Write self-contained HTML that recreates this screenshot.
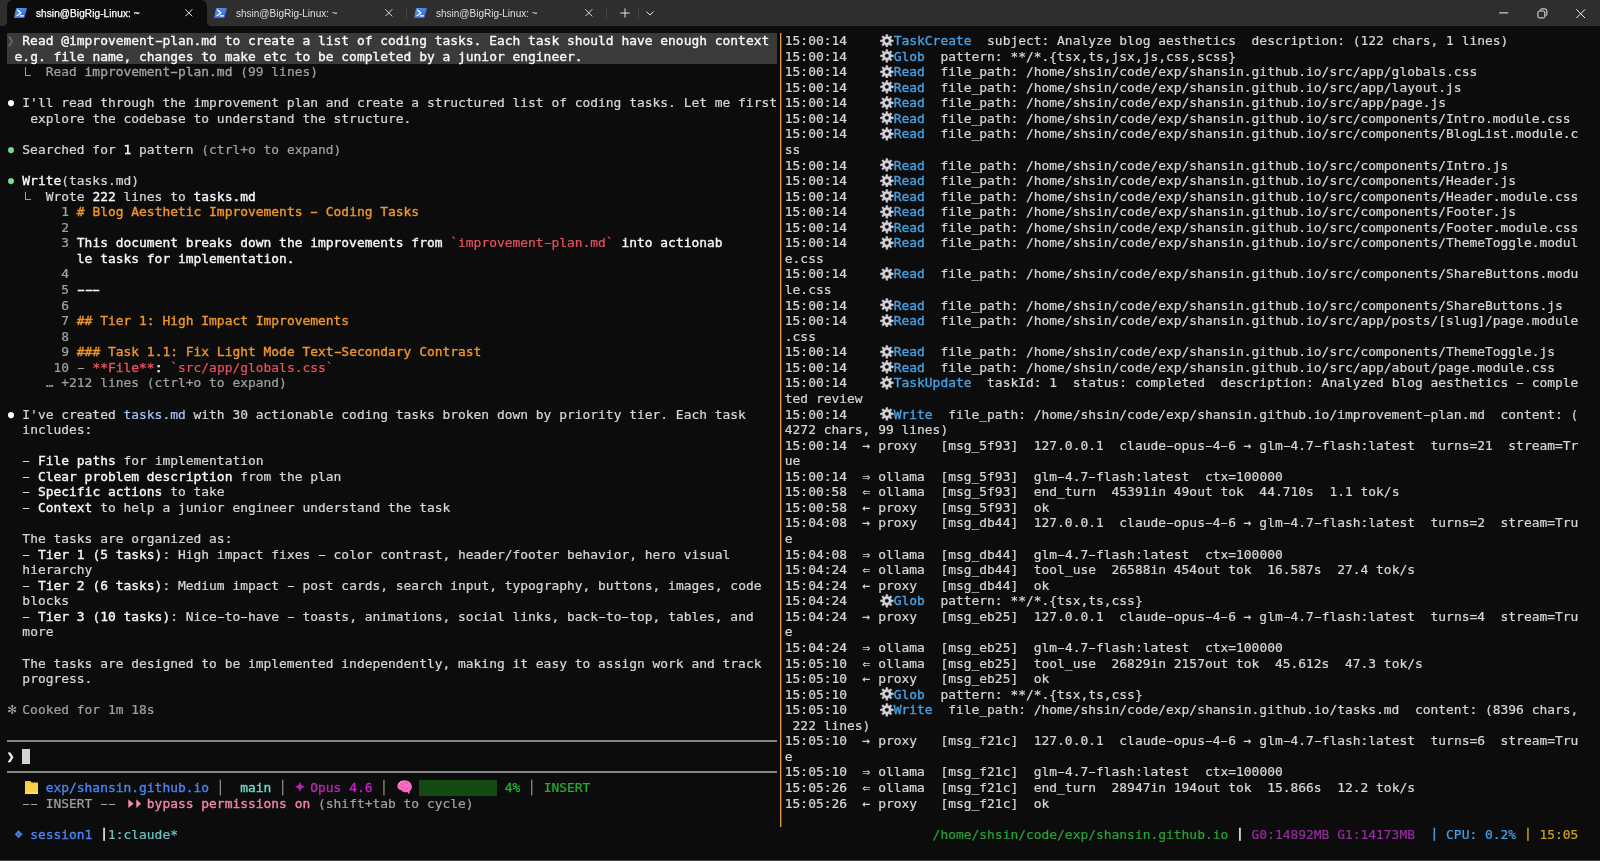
<!DOCTYPE html><html lang="en"><head><meta charset="utf-8"><title>shsin@BigRig-Linux: ~</title><style>
html,body{margin:0;padding:0}
body{width:1600px;height:861px;background:#0c0c0c;overflow:hidden;position:relative;font-family:"DejaVu Sans Mono","Liberation Mono",monospace}
#tb{position:absolute;left:0;top:0;width:1600px;height:25.8px;background:#2e2e2e}
.tab .t{will-change:transform}
.tab{position:absolute;top:0;height:25.5px;width:200px;font:10px "Liberation Sans",sans-serif;color:#dedede}
.tab .t{position:absolute;left:29px;top:8.100px;white-space:pre;line-height:12px;letter-spacing:0}
.tab .x{position:absolute;left:178px;top:9.200px;width:7.600px;height:7.600px}
.tab .ic{position:absolute;left:7.100px;top:8px;width:13px;height:10px}
#t1{left:7px;background:#0c0c0c;border-radius:6px 6px 0 0;color:#fff}
#t1 .t{-webkit-text-stroke:0.25px #fff;letter-spacing:0.1px}
#t2{left:207px}
#t3{left:407px}
.fl{position:absolute;top:21.500px;width:4px;height:4px;margin-left:2px;background:radial-gradient(circle at 0 0,#2e2e2e 3.600px,#0c0c0c 4.200px)}
.fr{margin-left:0;background:radial-gradient(circle at 100% 0,#2e2e2e 3.600px,#0c0c0c 4.200px)}
.vs{position:absolute;top:7px;width:1px;height:12px;background:#444}
.r{position:absolute;height:15.5625px;line-height:15.5625px;white-space:pre;font-size:12.92px;letter-spacing:0.0097px;color:#d6d6d6;-webkit-text-stroke:0.22px currentColor;font-kerning:none;font-variant-ligatures:none}
.r span,.r i{font-style:normal}
.g{display:inline-block;width:7.78px;height:15.5625px;vertical-align:top;text-align:center;letter-spacing:0;position:relative;overflow:visible}
.w2{width:15.56px}
.h{display:inline-block;transform:scaleX(1.8)}
.b{-webkit-text-stroke:0.36px currentColor}
.w{color:#f8f8f8}
.d{color:#a0a0a0}
.d2{color:#666}
.o{color:#f0962a}
.rd{color:#e8525f}
.lb{color:#a6c4f6}
.bl{color:#4a84ee}
.dia{top:-0.9px;font-size:13.6px}
.tl{color:#72dac6}
.sp{color:#8c8c8c}
.mg{color:#c421c4}
.pu{color:#b22bb2}
.gn{color:#22b02e}
.pk{color:#f486a5}
.cy{color:#6cc3c3}
.tb{color:#45a0e2}
.g2{color:#25a536}
.pp{color:#962d9e}
.yl{color:#c9a227}
.gr{color:#7bd88c}
.dot{font-size:10px}
.wh{color:#fff}
.big{width:17.78px;margin:0 -5px}
.star{font-size:15px;left:1.4px;-webkit-text-stroke:0}
.mg.big{font-size:15.5px;left:1.3px;top:-1.2px;-webkit-text-stroke:0.9px currentColor}
.dot{left:0.4px}
.pp2{top:-1.6px}
.hl{position:absolute;background:#3a3a3a}
.hr{position:absolute;height:1.4px;background:#868686}
.cur{background:#d4d4d4}
.bar{width:77.80px;background:#124a12}
.elb::after{content:"";position:absolute;left:3.1px;top:3.2px;width:4.3px;height:7.5px;border-left:1.25px solid #a0a0a0;border-bottom:1.25px solid #a0a0a0}
.gear{fill:#d3d1d8;stroke:#d3d1d8;stroke-width:.7px;stroke-linejoin:round;fill-rule:evenodd;position:absolute;left:1.95px;top:0.65px;width:13.7px;height:13.7px}
.fold{position:absolute;left:2.6px;top:1.2px;width:13.5px;height:13px}
.brain{position:absolute;left:1.1px;top:0px;width:15px;height:14px}
.tri svg{overflow:visible;position:absolute;left:0;top:0;width:15.56px;height:15.5625px}
#sep{position:absolute;left:779.8px;top:33px;width:1.4px;height:793.7px;background:#e59a4f;border-right:0.9px solid #6b3510}
#txt{position:absolute;left:0;top:0;width:1600px;height:861px;will-change:transform}
#bot{position:absolute;left:0;top:859.5px;width:1600px;height:2px;background:#444}
</style></head><body>
<div id="tb"><div class="tab" id="t1"><svg class="ic" viewBox="0 0 13 10"><defs><linearGradient id="pg1" x1="0" y1="0" x2="1" y2="1"><stop offset="0" stop-color="#5b9bf0"/><stop offset="1" stop-color="#2c5fd0"/></linearGradient></defs><path d="M2.600 0H12.400Q13.100 0 12.900.7L10.700 9.300Q10.500 10 9.800 10H.6Q-.1 10 .1 9.300L2 .7Q2.100 0 2.600 0Z" fill="url(#pg1)"/><path d="M3.700 2.300 6.900 5 3 7.700" stroke="#fff" stroke-width="1.250" fill="none" stroke-linecap="round" stroke-linejoin="round"/><path d="M6.400 7.900H9.600" stroke="#fff" stroke-width="1.150" stroke-linecap="round"/></svg><span class="t">shsin@BigRig-Linux: ~</span><svg class="x" viewBox="0 0 8 8"><path d="M.3.3l7.400 7.400M7.700.3l-7.400 7.400" stroke="#f4f4f4" stroke-width="1"/></svg></div><div class="tab" id="t2"><svg class="ic" viewBox="0 0 13 10"><defs><linearGradient id="pg2" x1="0" y1="0" x2="1" y2="1"><stop offset="0" stop-color="#5b9bf0"/><stop offset="1" stop-color="#2c5fd0"/></linearGradient></defs><path d="M2.600 0H12.400Q13.100 0 12.900.7L10.700 9.300Q10.500 10 9.800 10H.6Q-.1 10 .1 9.300L2 .7Q2.100 0 2.600 0Z" fill="url(#pg2)"/><path d="M3.700 2.300 6.900 5 3 7.700" stroke="#fff" stroke-width="1.250" fill="none" stroke-linecap="round" stroke-linejoin="round"/><path d="M6.400 7.900H9.600" stroke="#fff" stroke-width="1.150" stroke-linecap="round"/></svg><span class="t">shsin@BigRig-Linux: ~</span><svg class="x" viewBox="0 0 8 8"><path d="M.3.3l7.400 7.400M7.700.3l-7.400 7.400" stroke="#dcdcdc" stroke-width="1"/></svg></div><div class="tab" id="t3"><svg class="ic" viewBox="0 0 13 10"><defs><linearGradient id="pg3" x1="0" y1="0" x2="1" y2="1"><stop offset="0" stop-color="#5b9bf0"/><stop offset="1" stop-color="#2c5fd0"/></linearGradient></defs><path d="M2.600 0H12.400Q13.100 0 12.900.7L10.700 9.300Q10.500 10 9.800 10H.6Q-.1 10 .1 9.300L2 .7Q2.100 0 2.600 0Z" fill="url(#pg3)"/><path d="M3.700 2.300 6.900 5 3 7.700" stroke="#fff" stroke-width="1.250" fill="none" stroke-linecap="round" stroke-linejoin="round"/><path d="M6.400 7.900H9.600" stroke="#fff" stroke-width="1.150" stroke-linecap="round"/></svg><span class="t">shsin@BigRig-Linux: ~</span><svg class="x" viewBox="0 0 8 8"><path d="M.3.3l7.400 7.400M7.700.3l-7.400 7.400" stroke="#dcdcdc" stroke-width="1"/></svg></div>
<div class="fl" style="left:1px"></div><div class="fl fr" style="left:207px"></div>
<div class="vs" style="left:406px"></div><div class="vs" style="left:606px"></div><div class="vs" style="left:638px"></div>
<svg style="position:absolute;left:619.500px;top:8px" width="10" height="10" viewBox="0 0 10 10"><path d="M5 .4v9.200M.4 5h9.200" stroke="#e4e4e4" stroke-width="1"/></svg>
<svg style="position:absolute;left:645.500px;top:11px" width="8" height="5" viewBox="0 0 8 5"><path d="M.5.600 4 4 7.500.6" stroke="#e4e4e4" stroke-width="1" fill="none"/></svg>
<svg style="position:absolute;left:1499px;top:8px" width="10" height="10" viewBox="0 0 10 10"><path d="M.2 4.900h9" stroke="#f0f0f0" stroke-width="1"/></svg>
<svg style="position:absolute;left:1537px;top:7.500px" width="11" height="11" viewBox="0 0 11 11"><rect x=".9" y="3" width="6.900" height="6.900" rx="1.500" stroke="#f0f0f0" fill="none" stroke-width="1"/><path d="M2.900 2.200Q3.200.900 4.600.9H8Q9.900.9 9.900 2.800V6.200Q9.900 7.600 8.600 7.900" stroke="#f0f0f0" fill="none" stroke-width="1"/></svg>
<svg style="position:absolute;left:1576.400px;top:8.500px" width="9.400" height="9.400" viewBox="0 0 9.400 9.400"><path d="M.3.300l8.800 8.800M9.100.3L.3 9.100" stroke="#f4f4f4" stroke-width="1"/></svg>
</div>
<div class="hl" style="left:6.6px;top:32.90px;width:770.22px;height:30.82px"></div>
<div class="hr" style="left:7px;top:740.34px;width:770.22px"></div>
<div class="hr" style="left:7px;top:771.47px;width:770.22px"></div>
<div id="sep"></div><div id="txt">
<div class="r" style="left:6.80px;top:33.00px"><i class="g d2">❯</i> <span class="b w">Read @improvement<i class="h">-</i>plan.md to create a list of coding tasks. Each task should have enough context</span></div>
<div class="r" style="left:6.80px;top:48.56px"> <span class="b w">e.g. file name, changes to make etc to be completed by a junior engineer.</span></div>
<div class="r" style="left:6.80px;top:64.12px"><span class="d">  </span><i class="g elb"></i><span class="d">  Read </span><span class="d b">improvement<i class="h">-</i>plan.md</span><span class="d"> (99 lines)</span></div>
<div class="r" style="left:6.80px;top:95.25px"><i class="g dot wh">●</i> I'll read through the improvement plan and create a structured list of coding tasks. Let me first</div>
<div class="r" style="left:6.80px;top:110.81px">   explore the codebase to understand the structure.</div>
<div class="r" style="left:6.80px;top:141.94px"><i class="g dot gr">●</i> Searched for <span class="b w">1</span> pattern <span class="d">(ctrl+o to expand)</span></div>
<div class="r" style="left:6.80px;top:173.06px"><i class="g dot gr">●</i> <span class="b w">Write</span>(tasks.md)</div>
<div class="r" style="left:6.80px;top:188.62px">  <i class="g elb"></i>  Wrote <span class="b w">222</span> lines to <span class="b w">tasks.md</span></div>
<div class="r" style="left:6.80px;top:204.19px"><span class="d">       1 </span><span class="o b"># Blog Aesthetic Improvements </span><span class="o b"><i class="h">-</i></span><span class="o b"> Coding Tasks</span></div>
<div class="r" style="left:6.80px;top:219.75px"><span class="d">       2 </span></div>
<div class="r" style="left:6.80px;top:235.31px"><span class="d">       3 </span><span class="b w">This document breaks down the improvements from </span><span class="rd">`improvement<i class="h">-</i>plan.md`</span><span class="b w"> into actionab</span></div>
<div class="r" style="left:6.80px;top:250.88px"><span class="b w">         le tasks for implementation.</span></div>
<div class="r" style="left:6.80px;top:266.44px"><span class="d">       4 </span></div>
<div class="r" style="left:6.80px;top:282.00px"><span class="d">       5 </span><span class="b w"><i class="h">-</i><i class="h">-</i><i class="h">-</i></span></div>
<div class="r" style="left:6.80px;top:297.56px"><span class="d">       6 </span></div>
<div class="r" style="left:6.80px;top:313.12px"><span class="d">       7 </span><span class="o b">## Tier 1: High Impact Improvements</span></div>
<div class="r" style="left:6.80px;top:328.69px"><span class="d">       8 </span></div>
<div class="r" style="left:6.80px;top:344.25px"><span class="d">       9 </span><span class="o b">### Task 1.1: Fix Light Mode Text<i class="h">-</i>Secondary Contrast</span></div>
<div class="r" style="left:6.80px;top:359.81px"><span class="d">      10 </span><span class="d"><i class="h">-</i> </span><span class="rd b">**File**</span><span class="b w">: </span><span class="rd">`src/app/globals.css`</span></div>
<div class="r" style="left:6.80px;top:375.38px"><span class="d">     … +212 lines (ctrl+o to expand)</span></div>
<div class="r" style="left:6.80px;top:406.50px"><i class="g dot wh">●</i> I've created <span class="lb">tasks.md</span> with 30 actionable coding tasks broken down by priority tier. Each task</div>
<div class="r" style="left:6.80px;top:422.06px">  includes:</div>
<div class="r" style="left:6.80px;top:453.19px">  <i class="h">-</i> <span class="b w">File paths</span> for implementation</div>
<div class="r" style="left:6.80px;top:468.75px">  <i class="h">-</i> <span class="b w">Clear problem description</span> from the plan</div>
<div class="r" style="left:6.80px;top:484.31px">  <i class="h">-</i> <span class="b w">Specific actions</span> to take</div>
<div class="r" style="left:6.80px;top:499.88px">  <i class="h">-</i> <span class="b w">Context</span> to help a junior engineer understand the task</div>
<div class="r" style="left:6.80px;top:531.00px">  The tasks are organized as:</div>
<div class="r" style="left:6.80px;top:546.56px">  <i class="h">-</i> <span class="b w">Tier 1 (5 tasks)</span>: High impact fixes <i class="h">-</i> color contrast, header/footer behavior, hero visual</div>
<div class="r" style="left:6.80px;top:562.12px">  hierarchy</div>
<div class="r" style="left:6.80px;top:577.69px">  <i class="h">-</i> <span class="b w">Tier 2 (6 tasks)</span>: Medium impact <i class="h">-</i> post cards, search input, typography, buttons, images, code</div>
<div class="r" style="left:6.80px;top:593.25px">  blocks</div>
<div class="r" style="left:6.80px;top:608.81px">  <i class="h">-</i> <span class="b w">Tier 3 (10 tasks)</span>: Nice<i class="h">-</i>to<i class="h">-</i>have <i class="h">-</i> toasts, animations, social links, back<i class="h">-</i>to<i class="h">-</i>top, tables, and</div>
<div class="r" style="left:6.80px;top:624.38px">  more</div>
<div class="r" style="left:6.80px;top:655.50px">  The tasks are designed to be implemented independently, making it easy to assign work and track</div>
<div class="r" style="left:6.80px;top:671.06px">  progress.</div>
<div class="r" style="left:6.80px;top:702.19px"><i class="g d star big">✻</i><span class="d"> Cooked for 1m 18s</span></div>
<div class="r" style="left:6.80px;top:748.88px"><i class="g b w">❯</i> <i class="g cur"></i></div>
<div class="r" style="left:6.80px;top:780.00px">  <i class="g w2"><svg class="fold" viewBox="0 0 13.5 13"><path d="M0 1Q0 0 1 0H5.2L6.8 1.6H12.6Q13.5 1.6 13.5 2.5V12.2Q13.5 13 12.7 13H.8Q0 13 0 12.2Z" fill="#f9c840"/><path d="M0 3.2H13.5V12.2Q13.5 13 12.7 13H.8Q0 13 0 12.2Z" fill="#fbd247"/><path d="M0 11.6H13.5V12.2Q13.5 13 12.7 13H.8Q0 13 0 12.2Z" fill="#ffe06a"/></svg></i> <span class="bl b">exp/shansin.github.io</span> <span class="sp">│</span>  <span class="tl b">main</span> <span class="sp">│</span> <i class="g mg big">✦</i> <span class="pu b">Opus </span><span class="mg b">4.6</span> <span class="sp">│</span> <i class="g w2"><svg class="brain" viewBox="0 0 15 14"><path d="M7.6.2C4.6.1 1.9 1.5.9 4 .1 5.9.3 7.9 1.6 9.100c.9.800 2 .9 2.800 1.100.7 1.200 2.300 2 4 2.100.9 0 1.700-.1 2.300-.3l.7 1.600c.2.500 1 .4 1.100-.1l.2-2.300c1.500-1.100 2.300-2.900 2.200-4.800C14.700 2.900 11.600.3 7.600.2Z" fill="#fb6cc4"/><path d="M3.400 4.300c1-.9 2.300-.8 3 .1M8.200 3c1.300-.6 2.700-.1 3.200 1M4 7.400c.9.700 2.100.5 2.700-.3M8.600 8.300c1.100.7 2.500.4 3.200-.6M6.500 10c.8.500 1.700.5 2.400 0" stroke="#e548a8" stroke-width=".8" fill="none" stroke-linecap="round"/><path d="M1.900 4.200C2.500 2.800 3.700 1.800 5.100 1.400" stroke="#ffa6e0" stroke-width=".9" fill="none" stroke-linecap="round"/></svg></i> <i class="g bar"></i> <span class="gn b">4%</span> <span class="sp">│</span> <span class="gn">INSERT</span></div>
<div class="r" style="left:6.80px;top:795.56px"><span class="d">  <i class="h">-</i><i class="h">-</i> INSERT <i class="h">-</i><i class="h">-</i> </span><i class="g w2 tri"><svg viewBox="0 0 15.56 15.55"><path d="M4.300 3.300 9.600 7.650 4.300 12ZM12.300 3.300 17.100 7.650 12.300 12Z" fill="#f58aa8"/></svg></i> <span class="pk b">bypass permissions on</span><span class="d"> (shift+tab to cycle)</span></div>
<div class="r" style="left:6.80px;top:826.69px"> <i class="g bl dia">❖</i> <span class="bl b">session1</span> <i class="g b w pp2">|</i><span class="cy">1:claude*</span></div>
<div class="r" style="left:784.80px;top:33.00px">15:00:14    <i class="g w2"><svg class="gear" viewBox="-10.5 -10.5 21 21"><path d="M9.9 -1.3L9.9 1.3L6.7 1.5L5.8 3.7L7.9 6.1L6.1 7.9L3.7 5.8L1.5 6.7L1.3 9.9L-1.3 9.9L-1.5 6.7L-3.7 5.8L-6.1 7.9L-7.9 6.1L-5.8 3.7L-6.7 1.5L-9.9 1.3L-9.9 -1.3L-6.7 -1.5L-5.8 -3.7L-7.9 -6.1L-6.1 -7.9L-3.7 -5.8L-1.5 -6.7L-1.3 -9.9L1.3 -9.9L1.5 -6.7L3.7 -5.8L6.1 -7.9L7.9 -6.1L5.8 -3.7L6.7 -1.5ZM3.3 0A3.3 3.3 0 1 0 -3.3 0A3.3 3.3 0 1 0 3.3 0Z"/></svg></i><span class="tb b">TaskCreate</span>  subject: Analyze blog aesthetics  description: (122 chars, 1 lines)</div>
<div class="r" style="left:784.80px;top:48.56px">15:00:14    <i class="g w2"><svg class="gear" viewBox="-10.5 -10.5 21 21"><path d="M9.9 -1.3L9.9 1.3L6.7 1.5L5.8 3.7L7.9 6.1L6.1 7.9L3.7 5.8L1.5 6.7L1.3 9.9L-1.3 9.9L-1.5 6.7L-3.7 5.8L-6.1 7.9L-7.9 6.1L-5.8 3.7L-6.7 1.5L-9.9 1.3L-9.9 -1.3L-6.7 -1.5L-5.8 -3.7L-7.9 -6.1L-6.1 -7.9L-3.7 -5.8L-1.5 -6.7L-1.3 -9.9L1.3 -9.9L1.5 -6.7L3.7 -5.8L6.1 -7.9L7.9 -6.1L5.8 -3.7L6.7 -1.5ZM3.3 0A3.3 3.3 0 1 0 -3.3 0A3.3 3.3 0 1 0 3.3 0Z"/></svg></i><span class="tb b">Glob</span>  pattern: **/*.{tsx,ts,jsx,js,css,scss}</div>
<div class="r" style="left:784.80px;top:64.12px">15:00:14    <i class="g w2"><svg class="gear" viewBox="-10.5 -10.5 21 21"><path d="M9.9 -1.3L9.9 1.3L6.7 1.5L5.8 3.7L7.9 6.1L6.1 7.9L3.7 5.8L1.5 6.7L1.3 9.9L-1.3 9.9L-1.5 6.7L-3.7 5.8L-6.1 7.9L-7.9 6.1L-5.8 3.7L-6.7 1.5L-9.9 1.3L-9.9 -1.3L-6.7 -1.5L-5.8 -3.7L-7.9 -6.1L-6.1 -7.9L-3.7 -5.8L-1.5 -6.7L-1.3 -9.9L1.3 -9.9L1.5 -6.7L3.7 -5.8L6.1 -7.9L7.9 -6.1L5.8 -3.7L6.7 -1.5ZM3.3 0A3.3 3.3 0 1 0 -3.3 0A3.3 3.3 0 1 0 3.3 0Z"/></svg></i><span class="tb b">Read</span>  file_path: /home/shsin/code/exp/shansin.github.io/src/app/globals.css</div>
<div class="r" style="left:784.80px;top:79.69px">15:00:14    <i class="g w2"><svg class="gear" viewBox="-10.5 -10.5 21 21"><path d="M9.9 -1.3L9.9 1.3L6.7 1.5L5.8 3.7L7.9 6.1L6.1 7.9L3.7 5.8L1.5 6.7L1.3 9.9L-1.3 9.9L-1.5 6.7L-3.7 5.8L-6.1 7.9L-7.9 6.1L-5.8 3.7L-6.7 1.5L-9.9 1.3L-9.9 -1.3L-6.7 -1.5L-5.8 -3.7L-7.9 -6.1L-6.1 -7.9L-3.7 -5.8L-1.5 -6.7L-1.3 -9.9L1.3 -9.9L1.5 -6.7L3.7 -5.8L6.1 -7.9L7.9 -6.1L5.8 -3.7L6.7 -1.5ZM3.3 0A3.3 3.3 0 1 0 -3.3 0A3.3 3.3 0 1 0 3.3 0Z"/></svg></i><span class="tb b">Read</span>  file_path: /home/shsin/code/exp/shansin.github.io/src/app/layout.js</div>
<div class="r" style="left:784.80px;top:95.25px">15:00:14    <i class="g w2"><svg class="gear" viewBox="-10.5 -10.5 21 21"><path d="M9.9 -1.3L9.9 1.3L6.7 1.5L5.8 3.7L7.9 6.1L6.1 7.9L3.7 5.8L1.5 6.7L1.3 9.9L-1.3 9.9L-1.5 6.7L-3.7 5.8L-6.1 7.9L-7.9 6.1L-5.8 3.7L-6.7 1.5L-9.9 1.3L-9.9 -1.3L-6.7 -1.5L-5.8 -3.7L-7.9 -6.1L-6.1 -7.9L-3.7 -5.8L-1.5 -6.7L-1.3 -9.9L1.3 -9.9L1.5 -6.7L3.7 -5.8L6.1 -7.9L7.9 -6.1L5.8 -3.7L6.7 -1.5ZM3.3 0A3.3 3.3 0 1 0 -3.3 0A3.3 3.3 0 1 0 3.3 0Z"/></svg></i><span class="tb b">Read</span>  file_path: /home/shsin/code/exp/shansin.github.io/src/app/page.js</div>
<div class="r" style="left:784.80px;top:110.81px">15:00:14    <i class="g w2"><svg class="gear" viewBox="-10.5 -10.5 21 21"><path d="M9.9 -1.3L9.9 1.3L6.7 1.5L5.8 3.7L7.9 6.1L6.1 7.9L3.7 5.8L1.5 6.7L1.3 9.9L-1.3 9.9L-1.5 6.7L-3.7 5.8L-6.1 7.9L-7.9 6.1L-5.8 3.7L-6.7 1.5L-9.9 1.3L-9.9 -1.3L-6.7 -1.5L-5.8 -3.7L-7.9 -6.1L-6.1 -7.9L-3.7 -5.8L-1.5 -6.7L-1.3 -9.9L1.3 -9.9L1.5 -6.7L3.7 -5.8L6.1 -7.9L7.9 -6.1L5.8 -3.7L6.7 -1.5ZM3.3 0A3.3 3.3 0 1 0 -3.3 0A3.3 3.3 0 1 0 3.3 0Z"/></svg></i><span class="tb b">Read</span>  file_path: /home/shsin/code/exp/shansin.github.io/src/components/Intro.module.css</div>
<div class="r" style="left:784.80px;top:126.38px">15:00:14    <i class="g w2"><svg class="gear" viewBox="-10.5 -10.5 21 21"><path d="M9.9 -1.3L9.9 1.3L6.7 1.5L5.8 3.7L7.9 6.1L6.1 7.9L3.7 5.8L1.5 6.7L1.3 9.9L-1.3 9.9L-1.5 6.7L-3.7 5.8L-6.1 7.9L-7.9 6.1L-5.8 3.7L-6.7 1.5L-9.9 1.3L-9.9 -1.3L-6.7 -1.5L-5.8 -3.7L-7.9 -6.1L-6.1 -7.9L-3.7 -5.8L-1.5 -6.7L-1.3 -9.9L1.3 -9.9L1.5 -6.7L3.7 -5.8L6.1 -7.9L7.9 -6.1L5.8 -3.7L6.7 -1.5ZM3.3 0A3.3 3.3 0 1 0 -3.3 0A3.3 3.3 0 1 0 3.3 0Z"/></svg></i><span class="tb b">Read</span>  file_path: /home/shsin/code/exp/shansin.github.io/src/components/BlogList.module.c</div>
<div class="r" style="left:784.80px;top:141.94px">ss</div>
<div class="r" style="left:784.80px;top:157.50px">15:00:14    <i class="g w2"><svg class="gear" viewBox="-10.5 -10.5 21 21"><path d="M9.9 -1.3L9.9 1.3L6.7 1.5L5.8 3.7L7.9 6.1L6.1 7.9L3.7 5.8L1.5 6.7L1.3 9.9L-1.3 9.9L-1.5 6.7L-3.7 5.8L-6.1 7.9L-7.9 6.1L-5.8 3.7L-6.7 1.5L-9.9 1.3L-9.9 -1.3L-6.7 -1.5L-5.8 -3.7L-7.9 -6.1L-6.1 -7.9L-3.7 -5.8L-1.5 -6.7L-1.3 -9.9L1.3 -9.9L1.5 -6.7L3.7 -5.8L6.1 -7.9L7.9 -6.1L5.8 -3.7L6.7 -1.5ZM3.3 0A3.3 3.3 0 1 0 -3.3 0A3.3 3.3 0 1 0 3.3 0Z"/></svg></i><span class="tb b">Read</span>  file_path: /home/shsin/code/exp/shansin.github.io/src/components/Intro.js</div>
<div class="r" style="left:784.80px;top:173.06px">15:00:14    <i class="g w2"><svg class="gear" viewBox="-10.5 -10.5 21 21"><path d="M9.9 -1.3L9.9 1.3L6.7 1.5L5.8 3.7L7.9 6.1L6.1 7.9L3.7 5.8L1.5 6.7L1.3 9.9L-1.3 9.9L-1.5 6.7L-3.7 5.8L-6.1 7.9L-7.9 6.1L-5.8 3.7L-6.7 1.5L-9.9 1.3L-9.9 -1.3L-6.7 -1.5L-5.8 -3.7L-7.9 -6.1L-6.1 -7.9L-3.7 -5.8L-1.5 -6.7L-1.3 -9.9L1.3 -9.9L1.5 -6.7L3.7 -5.8L6.1 -7.9L7.9 -6.1L5.8 -3.7L6.7 -1.5ZM3.3 0A3.3 3.3 0 1 0 -3.3 0A3.3 3.3 0 1 0 3.3 0Z"/></svg></i><span class="tb b">Read</span>  file_path: /home/shsin/code/exp/shansin.github.io/src/components/Header.js</div>
<div class="r" style="left:784.80px;top:188.62px">15:00:14    <i class="g w2"><svg class="gear" viewBox="-10.5 -10.5 21 21"><path d="M9.9 -1.3L9.9 1.3L6.7 1.5L5.8 3.7L7.9 6.1L6.1 7.9L3.7 5.8L1.5 6.7L1.3 9.9L-1.3 9.9L-1.5 6.7L-3.7 5.8L-6.1 7.9L-7.9 6.1L-5.8 3.7L-6.7 1.5L-9.9 1.3L-9.9 -1.3L-6.7 -1.5L-5.8 -3.7L-7.9 -6.1L-6.1 -7.9L-3.7 -5.8L-1.5 -6.7L-1.3 -9.9L1.3 -9.9L1.5 -6.7L3.7 -5.8L6.1 -7.9L7.9 -6.1L5.8 -3.7L6.7 -1.5ZM3.3 0A3.3 3.3 0 1 0 -3.3 0A3.3 3.3 0 1 0 3.3 0Z"/></svg></i><span class="tb b">Read</span>  file_path: /home/shsin/code/exp/shansin.github.io/src/components/Header.module.css</div>
<div class="r" style="left:784.80px;top:204.19px">15:00:14    <i class="g w2"><svg class="gear" viewBox="-10.5 -10.5 21 21"><path d="M9.9 -1.3L9.9 1.3L6.7 1.5L5.8 3.7L7.9 6.1L6.1 7.9L3.7 5.8L1.5 6.7L1.3 9.9L-1.3 9.9L-1.5 6.7L-3.7 5.8L-6.1 7.9L-7.9 6.1L-5.8 3.7L-6.7 1.5L-9.9 1.3L-9.9 -1.3L-6.7 -1.5L-5.8 -3.7L-7.9 -6.1L-6.1 -7.9L-3.7 -5.8L-1.5 -6.7L-1.3 -9.9L1.3 -9.9L1.5 -6.7L3.7 -5.8L6.1 -7.9L7.9 -6.1L5.8 -3.7L6.7 -1.5ZM3.3 0A3.3 3.3 0 1 0 -3.3 0A3.3 3.3 0 1 0 3.3 0Z"/></svg></i><span class="tb b">Read</span>  file_path: /home/shsin/code/exp/shansin.github.io/src/components/Footer.js</div>
<div class="r" style="left:784.80px;top:219.75px">15:00:14    <i class="g w2"><svg class="gear" viewBox="-10.5 -10.5 21 21"><path d="M9.9 -1.3L9.9 1.3L6.7 1.5L5.8 3.7L7.9 6.1L6.1 7.9L3.7 5.8L1.5 6.7L1.3 9.9L-1.3 9.9L-1.5 6.7L-3.7 5.8L-6.1 7.9L-7.9 6.1L-5.8 3.7L-6.7 1.5L-9.9 1.3L-9.9 -1.3L-6.7 -1.5L-5.8 -3.7L-7.9 -6.1L-6.1 -7.9L-3.7 -5.8L-1.5 -6.7L-1.3 -9.9L1.3 -9.9L1.5 -6.7L3.7 -5.8L6.1 -7.9L7.9 -6.1L5.8 -3.7L6.7 -1.5ZM3.3 0A3.3 3.3 0 1 0 -3.3 0A3.3 3.3 0 1 0 3.3 0Z"/></svg></i><span class="tb b">Read</span>  file_path: /home/shsin/code/exp/shansin.github.io/src/components/Footer.module.css</div>
<div class="r" style="left:784.80px;top:235.31px">15:00:14    <i class="g w2"><svg class="gear" viewBox="-10.5 -10.5 21 21"><path d="M9.9 -1.3L9.9 1.3L6.7 1.5L5.8 3.7L7.9 6.1L6.1 7.9L3.7 5.8L1.5 6.7L1.3 9.9L-1.3 9.9L-1.5 6.7L-3.7 5.8L-6.1 7.9L-7.9 6.1L-5.8 3.7L-6.7 1.5L-9.9 1.3L-9.9 -1.3L-6.7 -1.5L-5.8 -3.7L-7.9 -6.1L-6.1 -7.9L-3.7 -5.8L-1.5 -6.7L-1.3 -9.9L1.3 -9.9L1.5 -6.7L3.7 -5.8L6.1 -7.9L7.9 -6.1L5.8 -3.7L6.7 -1.5ZM3.3 0A3.3 3.3 0 1 0 -3.3 0A3.3 3.3 0 1 0 3.3 0Z"/></svg></i><span class="tb b">Read</span>  file_path: /home/shsin/code/exp/shansin.github.io/src/components/ThemeToggle.modul</div>
<div class="r" style="left:784.80px;top:250.88px">e.css</div>
<div class="r" style="left:784.80px;top:266.44px">15:00:14    <i class="g w2"><svg class="gear" viewBox="-10.5 -10.5 21 21"><path d="M9.9 -1.3L9.9 1.3L6.7 1.5L5.8 3.7L7.9 6.1L6.1 7.9L3.7 5.8L1.5 6.7L1.3 9.9L-1.3 9.9L-1.5 6.7L-3.7 5.8L-6.1 7.9L-7.9 6.1L-5.8 3.7L-6.7 1.5L-9.9 1.3L-9.9 -1.3L-6.7 -1.5L-5.8 -3.7L-7.9 -6.1L-6.1 -7.9L-3.7 -5.8L-1.5 -6.7L-1.3 -9.9L1.3 -9.9L1.5 -6.7L3.7 -5.8L6.1 -7.9L7.9 -6.1L5.8 -3.7L6.7 -1.5ZM3.3 0A3.3 3.3 0 1 0 -3.3 0A3.3 3.3 0 1 0 3.3 0Z"/></svg></i><span class="tb b">Read</span>  file_path: /home/shsin/code/exp/shansin.github.io/src/components/ShareButtons.modu</div>
<div class="r" style="left:784.80px;top:282.00px">le.css</div>
<div class="r" style="left:784.80px;top:297.56px">15:00:14    <i class="g w2"><svg class="gear" viewBox="-10.5 -10.5 21 21"><path d="M9.9 -1.3L9.9 1.3L6.7 1.5L5.8 3.7L7.9 6.1L6.1 7.9L3.7 5.8L1.5 6.7L1.3 9.9L-1.3 9.9L-1.5 6.7L-3.7 5.8L-6.1 7.9L-7.9 6.1L-5.8 3.7L-6.7 1.5L-9.9 1.3L-9.9 -1.3L-6.7 -1.5L-5.8 -3.7L-7.9 -6.1L-6.1 -7.9L-3.7 -5.8L-1.5 -6.7L-1.3 -9.9L1.3 -9.9L1.5 -6.7L3.7 -5.8L6.1 -7.9L7.9 -6.1L5.8 -3.7L6.7 -1.5ZM3.3 0A3.3 3.3 0 1 0 -3.3 0A3.3 3.3 0 1 0 3.3 0Z"/></svg></i><span class="tb b">Read</span>  file_path: /home/shsin/code/exp/shansin.github.io/src/components/ShareButtons.js</div>
<div class="r" style="left:784.80px;top:313.12px">15:00:14    <i class="g w2"><svg class="gear" viewBox="-10.5 -10.5 21 21"><path d="M9.9 -1.3L9.9 1.3L6.7 1.5L5.8 3.7L7.9 6.1L6.1 7.9L3.7 5.8L1.5 6.7L1.3 9.9L-1.3 9.9L-1.5 6.7L-3.7 5.8L-6.1 7.9L-7.9 6.1L-5.8 3.7L-6.7 1.5L-9.9 1.3L-9.9 -1.3L-6.7 -1.5L-5.8 -3.7L-7.9 -6.1L-6.1 -7.9L-3.7 -5.8L-1.5 -6.7L-1.3 -9.9L1.3 -9.9L1.5 -6.7L3.7 -5.8L6.1 -7.9L7.9 -6.1L5.8 -3.7L6.7 -1.5ZM3.3 0A3.3 3.3 0 1 0 -3.3 0A3.3 3.3 0 1 0 3.3 0Z"/></svg></i><span class="tb b">Read</span>  file_path: /home/shsin/code/exp/shansin.github.io/src/app/posts/[slug]/page.module</div>
<div class="r" style="left:784.80px;top:328.69px">.css</div>
<div class="r" style="left:784.80px;top:344.25px">15:00:14    <i class="g w2"><svg class="gear" viewBox="-10.5 -10.5 21 21"><path d="M9.9 -1.3L9.9 1.3L6.7 1.5L5.8 3.7L7.9 6.1L6.1 7.9L3.7 5.8L1.5 6.7L1.3 9.9L-1.3 9.9L-1.5 6.7L-3.7 5.8L-6.1 7.9L-7.9 6.1L-5.8 3.7L-6.7 1.5L-9.9 1.3L-9.9 -1.3L-6.7 -1.5L-5.8 -3.7L-7.9 -6.1L-6.1 -7.9L-3.7 -5.8L-1.5 -6.7L-1.3 -9.9L1.3 -9.9L1.5 -6.7L3.7 -5.8L6.1 -7.9L7.9 -6.1L5.8 -3.7L6.7 -1.5ZM3.3 0A3.3 3.3 0 1 0 -3.3 0A3.3 3.3 0 1 0 3.3 0Z"/></svg></i><span class="tb b">Read</span>  file_path: /home/shsin/code/exp/shansin.github.io/src/components/ThemeToggle.js</div>
<div class="r" style="left:784.80px;top:359.81px">15:00:14    <i class="g w2"><svg class="gear" viewBox="-10.5 -10.5 21 21"><path d="M9.9 -1.3L9.9 1.3L6.7 1.5L5.8 3.7L7.9 6.1L6.1 7.9L3.7 5.8L1.5 6.7L1.3 9.9L-1.3 9.9L-1.5 6.7L-3.7 5.8L-6.1 7.9L-7.9 6.1L-5.8 3.7L-6.7 1.5L-9.9 1.3L-9.9 -1.3L-6.7 -1.5L-5.8 -3.7L-7.9 -6.1L-6.1 -7.9L-3.7 -5.8L-1.5 -6.7L-1.3 -9.9L1.3 -9.9L1.5 -6.7L3.7 -5.8L6.1 -7.9L7.9 -6.1L5.8 -3.7L6.7 -1.5ZM3.3 0A3.3 3.3 0 1 0 -3.3 0A3.3 3.3 0 1 0 3.3 0Z"/></svg></i><span class="tb b">Read</span>  file_path: /home/shsin/code/exp/shansin.github.io/src/app/about/page.module.css</div>
<div class="r" style="left:784.80px;top:375.38px">15:00:14    <i class="g w2"><svg class="gear" viewBox="-10.5 -10.5 21 21"><path d="M9.9 -1.3L9.9 1.3L6.7 1.5L5.8 3.7L7.9 6.1L6.1 7.9L3.7 5.8L1.5 6.7L1.3 9.9L-1.3 9.9L-1.5 6.7L-3.7 5.8L-6.1 7.9L-7.9 6.1L-5.8 3.7L-6.7 1.5L-9.9 1.3L-9.9 -1.3L-6.7 -1.5L-5.8 -3.7L-7.9 -6.1L-6.1 -7.9L-3.7 -5.8L-1.5 -6.7L-1.3 -9.9L1.3 -9.9L1.5 -6.7L3.7 -5.8L6.1 -7.9L7.9 -6.1L5.8 -3.7L6.7 -1.5ZM3.3 0A3.3 3.3 0 1 0 -3.3 0A3.3 3.3 0 1 0 3.3 0Z"/></svg></i><span class="tb b">TaskUpdate</span>  taskId: 1  status: completed  description: Analyzed blog aesthetics <i class="h">-</i> comple</div>
<div class="r" style="left:784.80px;top:390.94px">ted review</div>
<div class="r" style="left:784.80px;top:406.50px">15:00:14    <i class="g w2"><svg class="gear" viewBox="-10.5 -10.5 21 21"><path d="M9.9 -1.3L9.9 1.3L6.7 1.5L5.8 3.7L7.9 6.1L6.1 7.9L3.7 5.8L1.5 6.7L1.3 9.9L-1.3 9.9L-1.5 6.7L-3.7 5.8L-6.1 7.9L-7.9 6.1L-5.8 3.7L-6.7 1.5L-9.9 1.3L-9.9 -1.3L-6.7 -1.5L-5.8 -3.7L-7.9 -6.1L-6.1 -7.9L-3.7 -5.8L-1.5 -6.7L-1.3 -9.9L1.3 -9.9L1.5 -6.7L3.7 -5.8L6.1 -7.9L7.9 -6.1L5.8 -3.7L6.7 -1.5ZM3.3 0A3.3 3.3 0 1 0 -3.3 0A3.3 3.3 0 1 0 3.3 0Z"/></svg></i><span class="tb b">Write</span>  file_path: /home/shsin/code/exp/shansin.github.io/improvement<i class="h">-</i>plan.md  content: (</div>
<div class="r" style="left:784.80px;top:422.06px">4272 chars, 99 lines)</div>
<div class="r" style="left:784.80px;top:437.62px">15:00:14  <i class="g ar">→</i> proxy   [msg_5f93]  127.0.0.1  claude<i class="h">-</i>opus<i class="h">-</i>4<i class="h">-</i>6 <i class="g ar">→</i> glm<i class="h">-</i>4.7<i class="h">-</i>flash:latest  turns=21  stream=Tr</div>
<div class="r" style="left:784.80px;top:453.19px">ue</div>
<div class="r" style="left:784.80px;top:468.75px">15:00:14  <i class="g ar">⇒</i> ollama  [msg_5f93]  glm<i class="h">-</i>4.7<i class="h">-</i>flash:latest  ctx=100000</div>
<div class="r" style="left:784.80px;top:484.31px">15:00:58  <i class="g ar">⇐</i> ollama  [msg_5f93]  end_turn  45391in 49out tok  44.710s  1.1 tok/s</div>
<div class="r" style="left:784.80px;top:499.88px">15:00:58  <i class="g ar">←</i> proxy   [msg_5f93]  ok</div>
<div class="r" style="left:784.80px;top:515.44px">15:04:08  <i class="g ar">→</i> proxy   [msg_db44]  127.0.0.1  claude<i class="h">-</i>opus<i class="h">-</i>4<i class="h">-</i>6 <i class="g ar">→</i> glm<i class="h">-</i>4.7<i class="h">-</i>flash:latest  turns=2  stream=Tru</div>
<div class="r" style="left:784.80px;top:531.00px">e</div>
<div class="r" style="left:784.80px;top:546.56px">15:04:08  <i class="g ar">⇒</i> ollama  [msg_db44]  glm<i class="h">-</i>4.7<i class="h">-</i>flash:latest  ctx=100000</div>
<div class="r" style="left:784.80px;top:562.12px">15:04:24  <i class="g ar">⇐</i> ollama  [msg_db44]  tool_use  26588in 454out tok  16.587s  27.4 tok/s</div>
<div class="r" style="left:784.80px;top:577.69px">15:04:24  <i class="g ar">←</i> proxy   [msg_db44]  ok</div>
<div class="r" style="left:784.80px;top:593.25px">15:04:24    <i class="g w2"><svg class="gear" viewBox="-10.5 -10.5 21 21"><path d="M9.9 -1.3L9.9 1.3L6.7 1.5L5.8 3.7L7.9 6.1L6.1 7.9L3.7 5.8L1.5 6.7L1.3 9.9L-1.3 9.9L-1.5 6.7L-3.7 5.8L-6.1 7.9L-7.9 6.1L-5.8 3.7L-6.7 1.5L-9.9 1.3L-9.9 -1.3L-6.7 -1.5L-5.8 -3.7L-7.9 -6.1L-6.1 -7.9L-3.7 -5.8L-1.5 -6.7L-1.3 -9.9L1.3 -9.9L1.5 -6.7L3.7 -5.8L6.1 -7.9L7.9 -6.1L5.8 -3.7L6.7 -1.5ZM3.3 0A3.3 3.3 0 1 0 -3.3 0A3.3 3.3 0 1 0 3.3 0Z"/></svg></i><span class="tb b">Glob</span>  pattern: **/*.{tsx,ts,css}</div>
<div class="r" style="left:784.80px;top:608.81px">15:04:24  <i class="g ar">→</i> proxy   [msg_eb25]  127.0.0.1  claude<i class="h">-</i>opus<i class="h">-</i>4<i class="h">-</i>6 <i class="g ar">→</i> glm<i class="h">-</i>4.7<i class="h">-</i>flash:latest  turns=4  stream=Tru</div>
<div class="r" style="left:784.80px;top:624.38px">e</div>
<div class="r" style="left:784.80px;top:639.94px">15:04:24  <i class="g ar">⇒</i> ollama  [msg_eb25]  glm<i class="h">-</i>4.7<i class="h">-</i>flash:latest  ctx=100000</div>
<div class="r" style="left:784.80px;top:655.50px">15:05:10  <i class="g ar">⇐</i> ollama  [msg_eb25]  tool_use  26829in 2157out tok  45.612s  47.3 tok/s</div>
<div class="r" style="left:784.80px;top:671.06px">15:05:10  <i class="g ar">←</i> proxy   [msg_eb25]  ok</div>
<div class="r" style="left:784.80px;top:686.62px">15:05:10    <i class="g w2"><svg class="gear" viewBox="-10.5 -10.5 21 21"><path d="M9.9 -1.3L9.9 1.3L6.7 1.5L5.8 3.7L7.9 6.1L6.1 7.9L3.7 5.8L1.5 6.7L1.3 9.9L-1.3 9.9L-1.5 6.7L-3.7 5.8L-6.1 7.9L-7.9 6.1L-5.8 3.7L-6.7 1.5L-9.9 1.3L-9.9 -1.3L-6.7 -1.5L-5.8 -3.7L-7.9 -6.1L-6.1 -7.9L-3.7 -5.8L-1.5 -6.7L-1.3 -9.9L1.3 -9.9L1.5 -6.7L3.7 -5.8L6.1 -7.9L7.9 -6.1L5.8 -3.7L6.7 -1.5ZM3.3 0A3.3 3.3 0 1 0 -3.3 0A3.3 3.3 0 1 0 3.3 0Z"/></svg></i><span class="tb b">Glob</span>  pattern: **/*.{tsx,ts,css}</div>
<div class="r" style="left:784.80px;top:702.19px">15:05:10    <i class="g w2"><svg class="gear" viewBox="-10.5 -10.5 21 21"><path d="M9.9 -1.3L9.9 1.3L6.7 1.5L5.8 3.7L7.9 6.1L6.1 7.9L3.7 5.8L1.5 6.7L1.3 9.9L-1.3 9.9L-1.5 6.7L-3.7 5.8L-6.1 7.9L-7.9 6.1L-5.8 3.7L-6.7 1.5L-9.9 1.3L-9.9 -1.3L-6.7 -1.5L-5.8 -3.7L-7.9 -6.1L-6.1 -7.9L-3.7 -5.8L-1.5 -6.7L-1.3 -9.9L1.3 -9.9L1.5 -6.7L3.7 -5.8L6.1 -7.9L7.9 -6.1L5.8 -3.7L6.7 -1.5ZM3.3 0A3.3 3.3 0 1 0 -3.3 0A3.3 3.3 0 1 0 3.3 0Z"/></svg></i><span class="tb b">Write</span>  file_path: /home/shsin/code/exp/shansin.github.io/tasks.md  content: (8396 chars,</div>
<div class="r" style="left:784.80px;top:717.75px"> 222 lines)</div>
<div class="r" style="left:784.80px;top:733.31px">15:05:10  <i class="g ar">→</i> proxy   [msg_f21c]  127.0.0.1  claude<i class="h">-</i>opus<i class="h">-</i>4<i class="h">-</i>6 <i class="g ar">→</i> glm<i class="h">-</i>4.7<i class="h">-</i>flash:latest  turns=6  stream=Tru</div>
<div class="r" style="left:784.80px;top:748.88px">e</div>
<div class="r" style="left:784.80px;top:764.44px">15:05:10  <i class="g ar">⇒</i> ollama  [msg_f21c]  glm<i class="h">-</i>4.7<i class="h">-</i>flash:latest  ctx=100000</div>
<div class="r" style="left:784.80px;top:780.00px">15:05:26  <i class="g ar">⇐</i> ollama  [msg_f21c]  end_turn  28947in 194out tok  15.866s  12.2 tok/s</div>
<div class="r" style="left:784.80px;top:795.56px">15:05:26  <i class="g ar">←</i> proxy   [msg_f21c]  ok</div>
<div class="r" style="left:932.62px;top:826.69px"><span class="g2">/home/shsin/code/exp/shansin.github.io</span> <i class="g b w pp2">|</i> <span class="pp">G0:14892MB G1:14173MB</span>  <i class="g tb b pp2">|</i> <span class="tb">CPU:</span> <span class="tb">0.2%</span> <i class="g yl b pp2">|</i> <span class="yl">15:05</span></div>
</div><div id="bot"></div>
</body></html>
